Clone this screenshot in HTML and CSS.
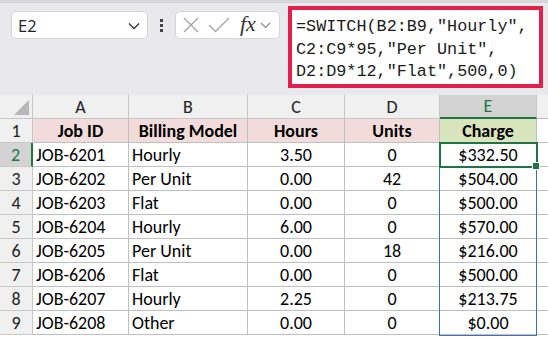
FILE: index.html
```html
<!DOCTYPE html>
<html>
<head>
<meta charset="utf-8">
<link rel="stylesheet" href="styles.css">
</head>
<body>
<div class="app">
  <div class="bar">
    <div class="namebox">
      <span class="ref">E2</span>
      <svg class="chev" width="12" height="8" viewBox="0 0 12 8"><path d="M1 1.5 L6 6.5 L11 1.5" fill="none" stroke="#333" stroke-width="1.3"/></svg>
    </div>
    <div class="dots"><i></i><i></i><i></i></div>
    <div class="funcs">
      <svg width="16" height="16" viewBox="0 0 16 16"><path d="M1 1 L15 15 M15 1 L1 15" stroke="#a6a6a6" stroke-width="1.4" fill="none"/></svg>
      <svg width="22" height="16" viewBox="0 0 22 16"><path d="M1 8 L7.5 14.5 L21 1" stroke="#a6a6a6" stroke-width="1.4" fill="none"/></svg>
      <span class="fx">fx</span>
      <svg width="11" height="7" viewBox="0 0 11 7"><path d="M1 1 L5.5 5.5 L10 1" fill="none" stroke="#8a8a8a" stroke-width="1.2"/></svg>
    </div>
    <div class="formula">=SWITCH(B2:B9,"Hourly",<br>C2:C9*95,"Per Unit",<br>D2:D9*12,"Flat",500,0)</div>
  </div>
  <div class="sheet">
    <div class="cell corner"><span class="tri"></span></div>
    <div class="cell colh">A</div>
    <div class="cell colh">B</div>
    <div class="cell colh">C</div>
    <div class="cell colh">D</div>
    <div class="cell colh sel">E</div>
    <div class="cell pad"></div>

    <div class="cell rowh">1</div>
    <div class="cell hdr">Job ID</div>
    <div class="cell hdr">Billing Model</div>
    <div class="cell hdr">Hours</div>
    <div class="cell hdr">Units</div>
    <div class="cell hdr green">Charge</div>
    <div class="cell pad"></div>

    <div class="cell rowh sel">2</div>
    <div class="cell">JOB-6201</div>
    <div class="cell">Hourly</div>
    <div class="cell c">3.50</div>
    <div class="cell c">0</div>
    <div class="cell c active">$332.50<span class="handle"></span></div>
    <div class="cell pad"></div>

    <div class="cell rowh">3</div>
    <div class="cell">JOB-6202</div>
    <div class="cell">Per Unit</div>
    <div class="cell c">0.00</div>
    <div class="cell c">42</div>
    <div class="cell c">$504.00</div>
    <div class="cell pad"></div>

    <div class="cell rowh">4</div>
    <div class="cell">JOB-6203</div>
    <div class="cell">Flat</div>
    <div class="cell c">0.00</div>
    <div class="cell c">0</div>
    <div class="cell c">$500.00</div>
    <div class="cell pad"></div>

    <div class="cell rowh">5</div>
    <div class="cell">JOB-6204</div>
    <div class="cell">Hourly</div>
    <div class="cell c">6.00</div>
    <div class="cell c">0</div>
    <div class="cell c">$570.00</div>
    <div class="cell pad"></div>

    <div class="cell rowh">6</div>
    <div class="cell">JOB-6205</div>
    <div class="cell">Per Unit</div>
    <div class="cell c">0.00</div>
    <div class="cell c">18</div>
    <div class="cell c">$216.00</div>
    <div class="cell pad"></div>

    <div class="cell rowh">7</div>
    <div class="cell">JOB-6206</div>
    <div class="cell">Flat</div>
    <div class="cell c">0.00</div>
    <div class="cell c">0</div>
    <div class="cell c">$500.00</div>
    <div class="cell pad"></div>

    <div class="cell rowh">8</div>
    <div class="cell">JOB-6207</div>
    <div class="cell">Hourly</div>
    <div class="cell c">2.25</div>
    <div class="cell c">0</div>
    <div class="cell c">$213.75</div>
    <div class="cell pad"></div>

    <div class="cell rowh">9</div>
    <div class="cell">JOB-6208</div>
    <div class="cell">Other</div>
    <div class="cell c">0.00</div>
    <div class="cell c">0</div>
    <div class="cell c">$0.00</div>
    <div class="cell pad"></div>

    <div class="range"></div>
  </div>
</div>
</body>
</html>
```

FILE: styles.css
```css
* { box-sizing: border-box; }
html, body { margin: 0; padding: 0; }
body {
  width: 548px;
  height: 339px;
  overflow: hidden;
  background: #ffffff;
  font-family: Carlito, Lato, "Liberation Sans", sans-serif;
}
.app { width: 548px; height: 339px; display: flex; flex-direction: column; }

.bar {
  height: 95px;
  background: #e9e9ed;
  border-top: 3px solid #d6d6da;
  display: flex;
  align-items: flex-start;
  position: relative;
}
.namebox {
  margin: 8px 0 0 11px;
  width: 137px;
  height: 28px;
  background: #fff;
  border: 1px solid #d4d4d8;
  border-radius: 5px;
  display: flex;
  align-items: center;
  justify-content: space-between;
  padding: 0 7px 0 6px;
}
.ref {
  font-family: "Open Sans", "Noto Sans", sans-serif;
  font-size: 16.5px;
  color: #222;
}
.chev { margin-top: 1px; }
.dots {
  width: 27px;
  height: 28px;
  margin-top: 8px;
  display: flex;
  flex-direction: column;
  align-items: center;
  justify-content: center;
  gap: 2px;
}
.dots i { display: block; width: 3px; height: 3px; background: #444; }
.funcs {
  margin-top: 8px;
  width: 105px;
  height: 28px;
  background: #fff;
  border: 1px solid #d4d4d8;
  border-radius: 5px;
  display: flex;
  align-items: center;
  padding: 0 4px 0 7px;
  gap: 9px;
}
.fx {
  font-family: "Liberation Serif", "DejaVu Serif", serif;
  font-style: italic;
  font-size: 22px;
  color: #333;
  margin-left: 1px;
  margin-right: -5px;
  line-height: 1;
  margin-top: -3px;
}
.formula {
  margin: 3px 0 0 8px;
  width: 255px;
  height: 82px;
  background: #fff;
  border: 4px solid #e3204b;
  padding: 6px 0 0 4px;
  font-family: "Liberation Mono", "DejaVu Sans Mono", monospace;
  font-size: 16.8px;
  line-height: 22.5px;
  color: #1a1a1a;
  white-space: nowrap;
}

.sheet {
  position: relative;
  display: grid;
  grid-template-columns: 33px 96px 119px 97px 95px 97px 11px;
  grid-auto-rows: 24px;
  font-size: 18px;
  color: #000;
}
.cell {
  border-right: 1px solid #bfbfbf;
  border-bottom: 1px solid #bfbfbf;
  display: flex;
  align-items: center;
  padding-left: 3px;
  white-space: nowrap;
  position: relative;
}
.cell.c { justify-content: center; padding-left: 0; }
.pad { border-right: none; background: #fff; }
.corner, .colh, .rowh { background: #f0f0f0; border-color: #c8c8c8; }
.sheet > .pad:nth-child(7) { background: #f0f0f0; }
.tri {
  position: absolute;
  right: 3px;
  bottom: 3px;
  width: 0; height: 0;
  border-left: 15px solid transparent;
  border-bottom: 15px solid #b8b8b8;
}
.colh { justify-content: center; padding-left: 0; color: #222; }
.colh.sel { background: #d3d3d3; color: #217346; border-bottom: 2px solid #217346; }
.rowh { justify-content: center; padding-left: 0; color: #222; }
.rowh.sel { background: #d3d3d3; color: #217346; border-right: 2px solid #217346; }
.hdr { justify-content: center; padding-left: 0; font-weight: 700; background: #f2dcdb; }
.hdr.green { background: #d8e4bc; }
.active::after {
  content: "";
  position: absolute;
  left: -1px; top: -1px; right: -2px; bottom: -2px;
  border: 2px solid #217346;
  z-index: 2;
}
.handle {
  position: absolute;
  right: -4px;
  bottom: -4px;
  width: 6px;
  height: 6px;
  background: #217346;
  border: 1px solid #fff;
  z-index: 3;
  box-sizing: content-box;
}
.range {
  position: absolute;
  left: 439px;
  top: 72px;
  width: 98px;
  height: 169px;
  border: 1.5px solid #3a6fc6;
  border-top: none;
  pointer-events: none;
  z-index: 1;
}
```
